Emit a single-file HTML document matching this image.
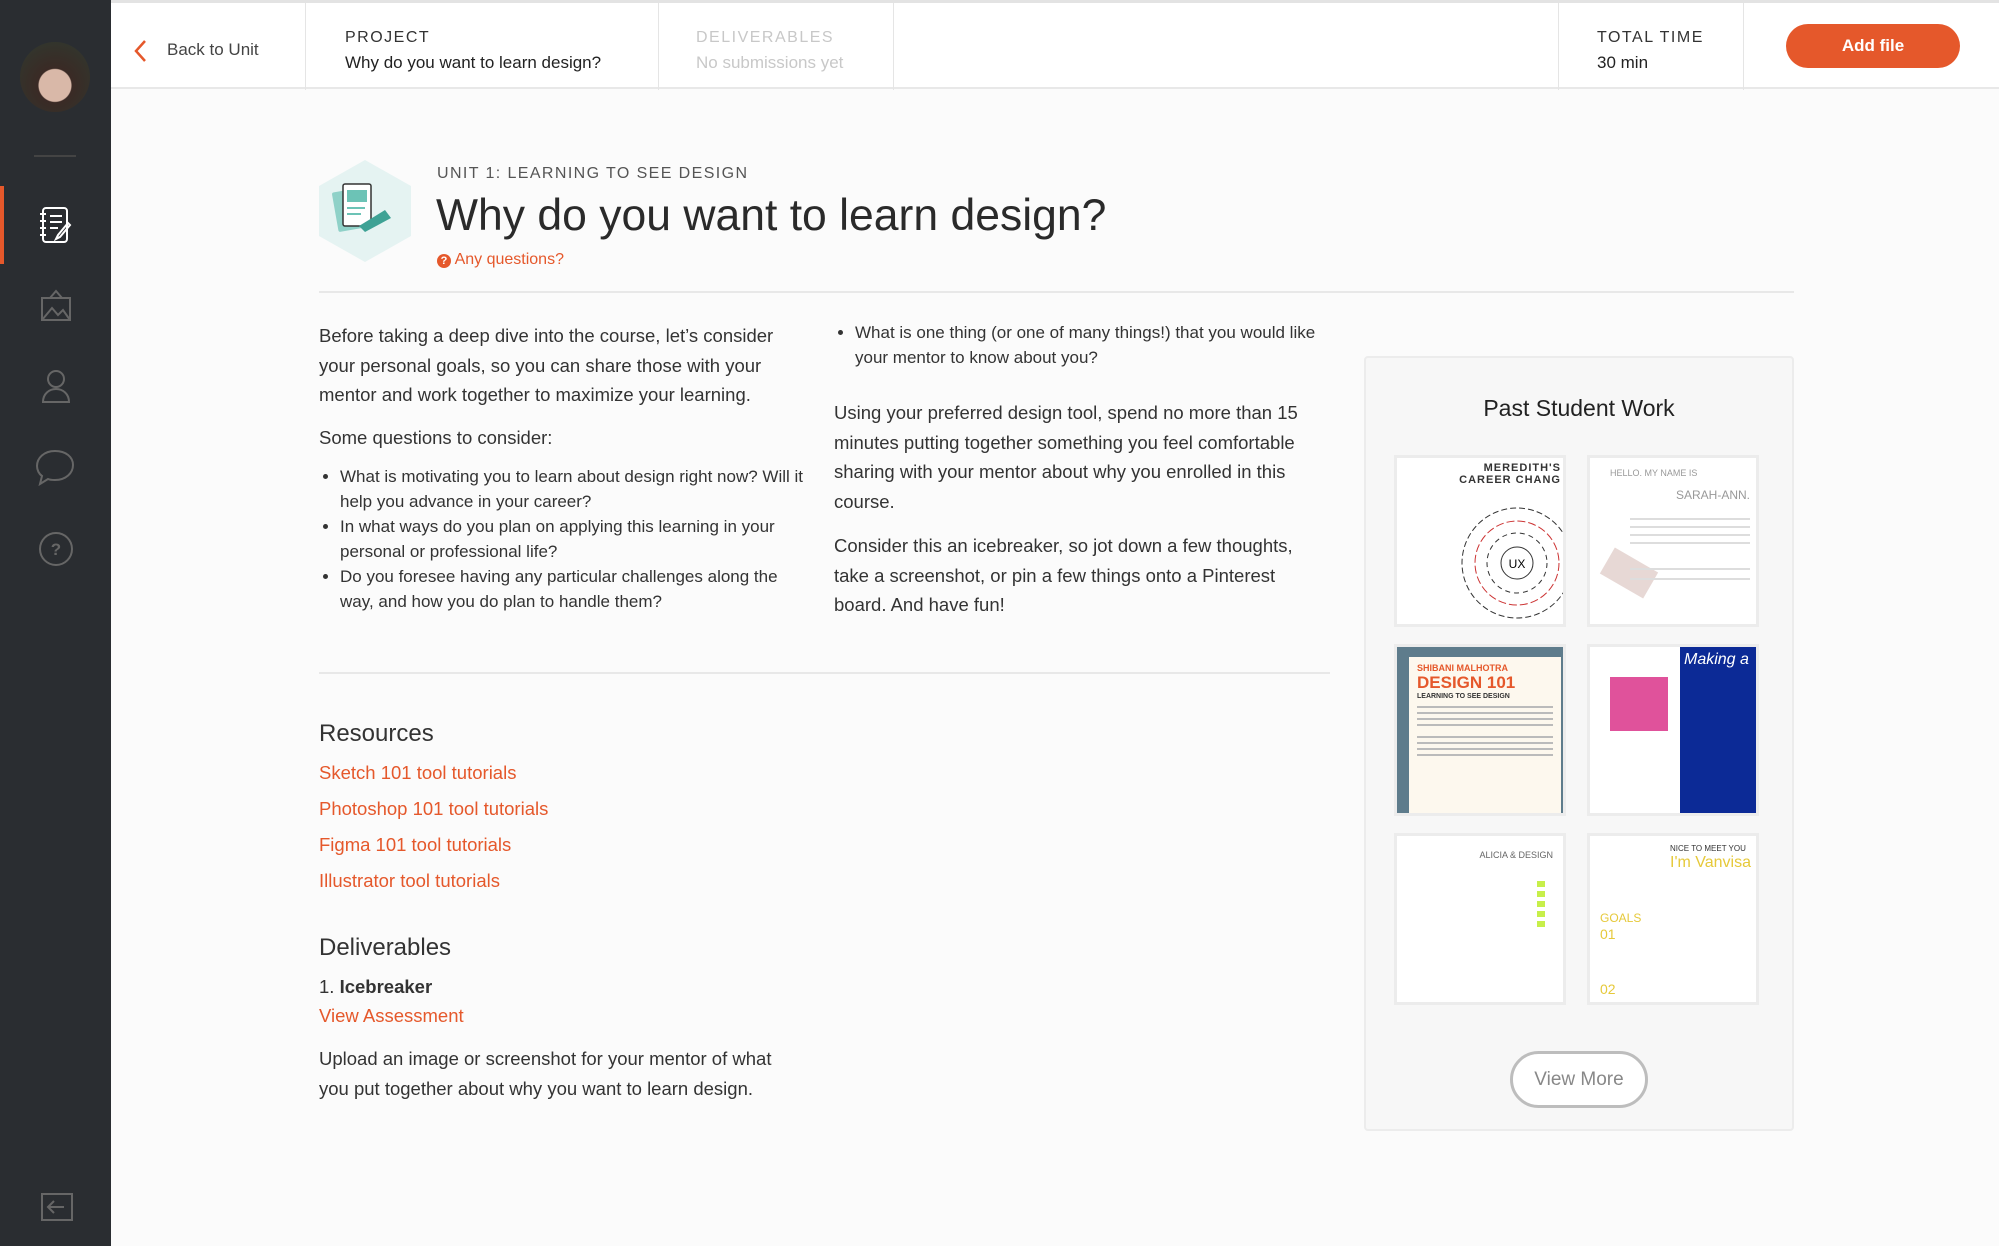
<!DOCTYPE html>
<html><head><meta charset="utf-8"><style>
*{box-sizing:border-box;margin:0;padding:0}
body{width:1999px;height:1246px;overflow:hidden;background:#fbfbfb;font-family:"Liberation Sans",sans-serif;color:#333;position:relative}
.abs{position:absolute}
#side{left:0;top:0;width:111px;height:1246px;background:#2a2d31}
#hdr{left:111px;top:0;width:1888px;height:89px;background:#fff;border-top:3px solid #e3e3e3;border-bottom:2px solid #e8e8e8}
.vd{position:absolute;top:0;width:1px;height:87px;background:#e5e5e5}
.lbl{font-size:16px;letter-spacing:1.5px;color:#333}
.sub{font-size:17px;color:#222}
.orange{color:#e5582b}
p,li{font-size:18.5px;line-height:29.5px;color:#333}
ul{padding-left:21px}
li{margin-bottom:2px}
.lk{font-size:18.5px;color:#e5582b}
.thumb{position:absolute;width:172px;height:172px;background:#fff;border:3px solid #ececec;overflow:hidden}
</style></head><body>
<div id="side" class="abs">
 <div class="abs" style="left:20px;top:42px;width:70px;height:70px;border-radius:50%;background:radial-gradient(circle at 50% 62%,#d9b8a8 0 16px,#3a2a25 17px,#2f3a30 100%)"></div>
 <div class="abs" style="left:34px;top:155px;width:42px;height:2px;background:#444"></div>
 <div class="abs" style="left:0;top:186px;width:4px;height:78px;background:#e5582b"></div>
 <svg class="abs" style="left:38px;top:205px" width="36" height="40" viewBox="0 0 36 40" fill="none" stroke="#fff" stroke-width="2"><rect x="5" y="3" width="24" height="34" rx="3"/><path d="M2 9h6M2 16h6M2 23h6M2 30h6M12 11h12M12 17h12M12 23h8M30 18l-10 12-2 4 4-2 10-12z"/></svg>
 <svg class="abs" style="left:38px;top:288px" width="36" height="36" viewBox="0 0 36 36" fill="none" stroke="#666" stroke-width="2"><path d="M4 32V10h28v22zM4 32l10-12 6 7 5-5 7 10M12 10l6-7 6 7"/></svg>
 <svg class="abs" style="left:40px;top:368px" width="32" height="36" viewBox="0 0 32 36" fill="none" stroke="#666" stroke-width="2"><circle cx="16" cy="11" r="8"/><path d="M3 34c0-8 6-13 13-13s13 5 13 13z"/></svg>
 <svg class="abs" style="left:34px;top:448px" width="42" height="38" viewBox="0 0 42 38" fill="none" stroke="#666" stroke-width="2"><path d="M21 3C10 3 3 10 3 18c0 4 2 8 5 10l-2 8 8-5c2 1 4 1 7 1 11 0 18-7 18-15S32 3 21 3z"/></svg>
 <svg class="abs" style="left:37px;top:530px" width="38" height="38" viewBox="0 0 38 38" fill="none" stroke="#666" stroke-width="2"><circle cx="19" cy="19" r="16"/><text x="19" y="25" font-size="17" fill="#666" stroke="none" text-anchor="middle" font-family="Liberation Sans" font-weight="bold">?</text></svg>
 <svg class="abs" style="left:40px;top:1192px" width="34" height="30" viewBox="0 0 34 30" fill="none" stroke="#666" stroke-width="2"><rect x="2" y="2" width="30" height="26"/><path d="M24 15H8M14 9l-6 6 6 6"/></svg>
</div>
<div id="hdr" class="abs">
 <svg class="abs" style="left:22px;top:36px" width="14" height="24" viewBox="0 0 14 24" fill="none" stroke="#e5582b" stroke-width="2.5"><path d="M12 2L3 12l9 10"/></svg>
 <div class="abs" style="left:56px;top:37px;font-size:17px;color:#444">Back to Unit</div>
 <div class="vd" style="left:194px"></div>
 <div class="abs lbl" style="left:234px;top:26px">PROJECT</div>
 <div class="abs sub" style="left:234px;top:50px">Why do you want to learn design?</div>
 <div class="vd" style="left:547px"></div>
 <div class="abs lbl" style="left:585px;top:26px;color:#c8c8c8">DELIVERABLES</div>
 <div class="abs sub" style="left:585px;top:50px;color:#c8c8c8">No submissions yet</div>
 <div class="vd" style="left:782px"></div>
 <div class="vd" style="left:1447px"></div>
 <div class="abs lbl" style="left:1486px;top:26px">TOTAL TIME</div>
 <div class="abs sub" style="left:1486px;top:50px">30 min</div>
 <div class="vd" style="left:1632px"></div>
 <div class="abs" style="left:1675px;top:21px;width:174px;height:44px;border-radius:22px;background:#e5582b;color:#fff;font-size:17px;font-weight:bold;text-align:center;line-height:44px">Add file</div>
</div>
<svg class="abs" style="left:319px;top:160px" width="92" height="102" viewBox="0 0 92 102"><path d="M46 0L92 26v50L46 102 0 76V26z" fill="#e5f3f2"/><rect x="16" y="30" width="28" height="40" rx="2" fill="#8fd1c8" transform="rotate(-10 30 50)"/><rect x="24" y="24" width="28" height="42" rx="2" fill="#fff" stroke="#333" stroke-width="1.5"/><rect x="28" y="30" width="20" height="12" fill="#6cc3b6"/><path d="M28 48h18M28 54h14" stroke="#6cc3b6" stroke-width="2"/><path d="M40 66l26-16 6 8-26 14z" fill="#3ea295"/></svg>
<div class="abs" style="left:437px;top:165px;font-size:16px;letter-spacing:1.4px;color:#555">UNIT 1: LEARNING TO SEE DESIGN</div>
<div class="abs" style="left:436px;top:191px;font-size:44.5px;color:#2a2a2a">Why do you want to learn design?</div>
<div class="abs orange" style="left:437px;top:251px;font-size:16px"><span style="display:inline-block;width:14px;height:14px;border-radius:50%;background:#e5582b;color:#fff;font-size:11px;text-align:center;line-height:14px;font-weight:bold">?</span> Any questions?</div>
<div class="abs" style="left:319px;top:291px;width:1475px;height:2px;background:#e8e8e8"></div>
<div class="abs" style="left:319px;top:321px;width:486px">
 <p>Before taking a deep dive into the course, let’s consider your personal goals, so you can share those with your mentor and work together to maximize your learning.</p>
 <p style="margin-top:13px">Some questions to consider:</p>
 <ul style="margin-top:12px;font-size:17px"><li style="font-size:17px;line-height:25px;margin-bottom:0">What is motivating you to learn about design right now? Will it help you advance in your career?</li><li style="font-size:17px;line-height:25px;margin-bottom:0">In what ways do you plan on applying this learning in your personal or professional life?</li><li style="font-size:17px;line-height:25px">Do you foresee having any particular challenges along the way, and how you do plan to handle them?</li></ul>
</div>
<div class="abs" style="left:834px;top:320px;width:484px">
 <ul><li style="font-size:17px;line-height:25px">What is one thing (or one of many things!) that you would like your mentor to know about you?</li></ul>
 <p style="margin-top:28px">Using your preferred design tool, spend no more than 15 minutes putting together something you feel comfortable sharing with your mentor about why you enrolled in this course.</p>
 <p style="margin-top:15px">Consider this an icebreaker, so jot down a few thoughts, take a screenshot, or pin a few things onto a Pinterest board. And have fun!</p>
</div>
<div class="abs" style="left:319px;top:672px;width:1011px;height:2px;background:#e8e8e8"></div>
<div class="abs" style="left:319px;top:720px;font-size:24px;color:#333">Resources</div>
<div class="abs lk" style="left:319px;top:762px">Sketch 101 tool tutorials</div>
<div class="abs lk" style="left:319px;top:798px">Photoshop 101 tool tutorials</div>
<div class="abs lk" style="left:319px;top:834px">Figma 101 tool tutorials</div>
<div class="abs lk" style="left:319px;top:870px">Illustrator tool tutorials</div>
<div class="abs" style="left:319px;top:934px;font-size:24px;color:#333">Deliverables</div>
<div class="abs" style="left:319px;top:976px;font-size:18.5px">1. <b>Icebreaker</b></div>
<div class="abs lk" style="left:319px;top:1005px">View Assessment</div>
<div class="abs" style="left:319px;top:1044px;width:486px"><p>Upload an image or screenshot for your mentor of what you put together about why you want to learn design.</p></div>
<div class="abs" style="left:1364px;top:356px;width:430px;height:775px;background:#f7f7f7;border:2px solid #ececec;border-radius:4px"></div>
<div class="abs" style="left:1364px;top:395px;width:430px;text-align:center;font-size:23px;color:#222">Past Student Work</div>
<div class="thumb" style="left:1394px;top:455px"><div style="text-align:right;font-size:11px;font-weight:bold;padding:4px 2px;letter-spacing:1px">MEREDITH'S<br>CAREER CHANG</div><svg width="172" height="130" style="position:absolute;left:0;top:40px"><circle cx="120" cy="65" r="55" fill="none" stroke="#333" stroke-width="1" stroke-dasharray="6 3"/><circle cx="120" cy="65" r="42" fill="none" stroke="#c33" stroke-width="1" stroke-dasharray="8 3"/><circle cx="120" cy="65" r="30" fill="none" stroke="#333" stroke-dasharray="5 4"/><circle cx="120" cy="65" r="16" fill="#fff" stroke="#333"/><text x="120" y="70" font-size="12" text-anchor="middle" font-family="Liberation Sans">UX</text></svg></div>
<div class="thumb" style="left:1587px;top:455px"><div style="font-size:9px;color:#999;padding:10px 20px">HELLO. MY NAME IS</div><div style="font-size:12px;color:#999;text-align:right;padding-right:6px">SARAH-ANN.</div><div style="position:absolute;left:14px;top:100px;width:50px;height:30px;background:#e7d8d5;transform:rotate(30deg)"></div><div style="position:absolute;left:40px;top:60px;width:120px;height:2px;background:#ddd;box-shadow:0 8px #ddd,0 16px #ddd,0 24px #ddd,0 50px #ddd,0 60px #ddd"></div></div>
<div class="thumb" style="left:1394px;top:644px;background:#5e7c8c"><div style="position:absolute;left:12px;top:10px;width:152px;height:158px;background:#fdf8ee;padding:6px 8px"><div style="color:#e5582b;font-size:9px;font-weight:bold">SHIBANI MALHOTRA</div><div style="color:#e5582b;font-size:17px;font-weight:bold">DESIGN 101</div><div style="font-size:7px;font-weight:bold">LEARNING TO SEE DESIGN</div><div style="margin-top:6px;height:2px;background:#bbb;box-shadow:0 6px #bbb,0 12px #bbb,0 18px #bbb,0 30px #bbb,0 36px #bbb,0 42px #bbb,0 48px #bbb"></div></div></div>
<div class="thumb" style="left:1587px;top:644px"><div style="position:absolute;left:20px;top:30px;width:58px;height:54px;background:#e0529b"></div><div style="position:absolute;left:90px;top:0;width:80px;height:172px;background:#0c2a96;color:#fff;font-size:16px;font-style:italic;padding:4px">Making a</div></div>
<div class="thumb" style="left:1394px;top:833px"><div style="text-align:right;font-size:9px;color:#666;padding:14px 10px">ALICIA &amp; DESIGN</div><div style="position:absolute;left:140px;top:45px;width:8px;height:50px;background:repeating-linear-gradient(#c7ef4a 0 6px,transparent 6px 10px)"></div></div>
<div class="thumb" style="left:1587px;top:833px"><div style="position:absolute;left:80px;top:8px;font-size:8px">NICE TO MEET YOU</div><div style="position:absolute;left:80px;top:18px;font-size:16px;color:#e6c93a">I'm Vanvisa</div><div style="position:absolute;left:10px;top:75px;font-size:12px;color:#e6c93a">GOALS</div><div style="position:absolute;left:10px;top:90px;font-size:14px;color:#e6c93a">01</div><div style="position:absolute;left:10px;top:145px;font-size:14px;color:#e6c93a">02</div></div>
<div class="abs" style="left:1510px;top:1051px;width:138px;height:57px;border:3px solid #bdbdbd;border-radius:29px;background:#fff;text-align:center;line-height:51px;font-size:19px;color:#888">View More</div>
</body></html>
